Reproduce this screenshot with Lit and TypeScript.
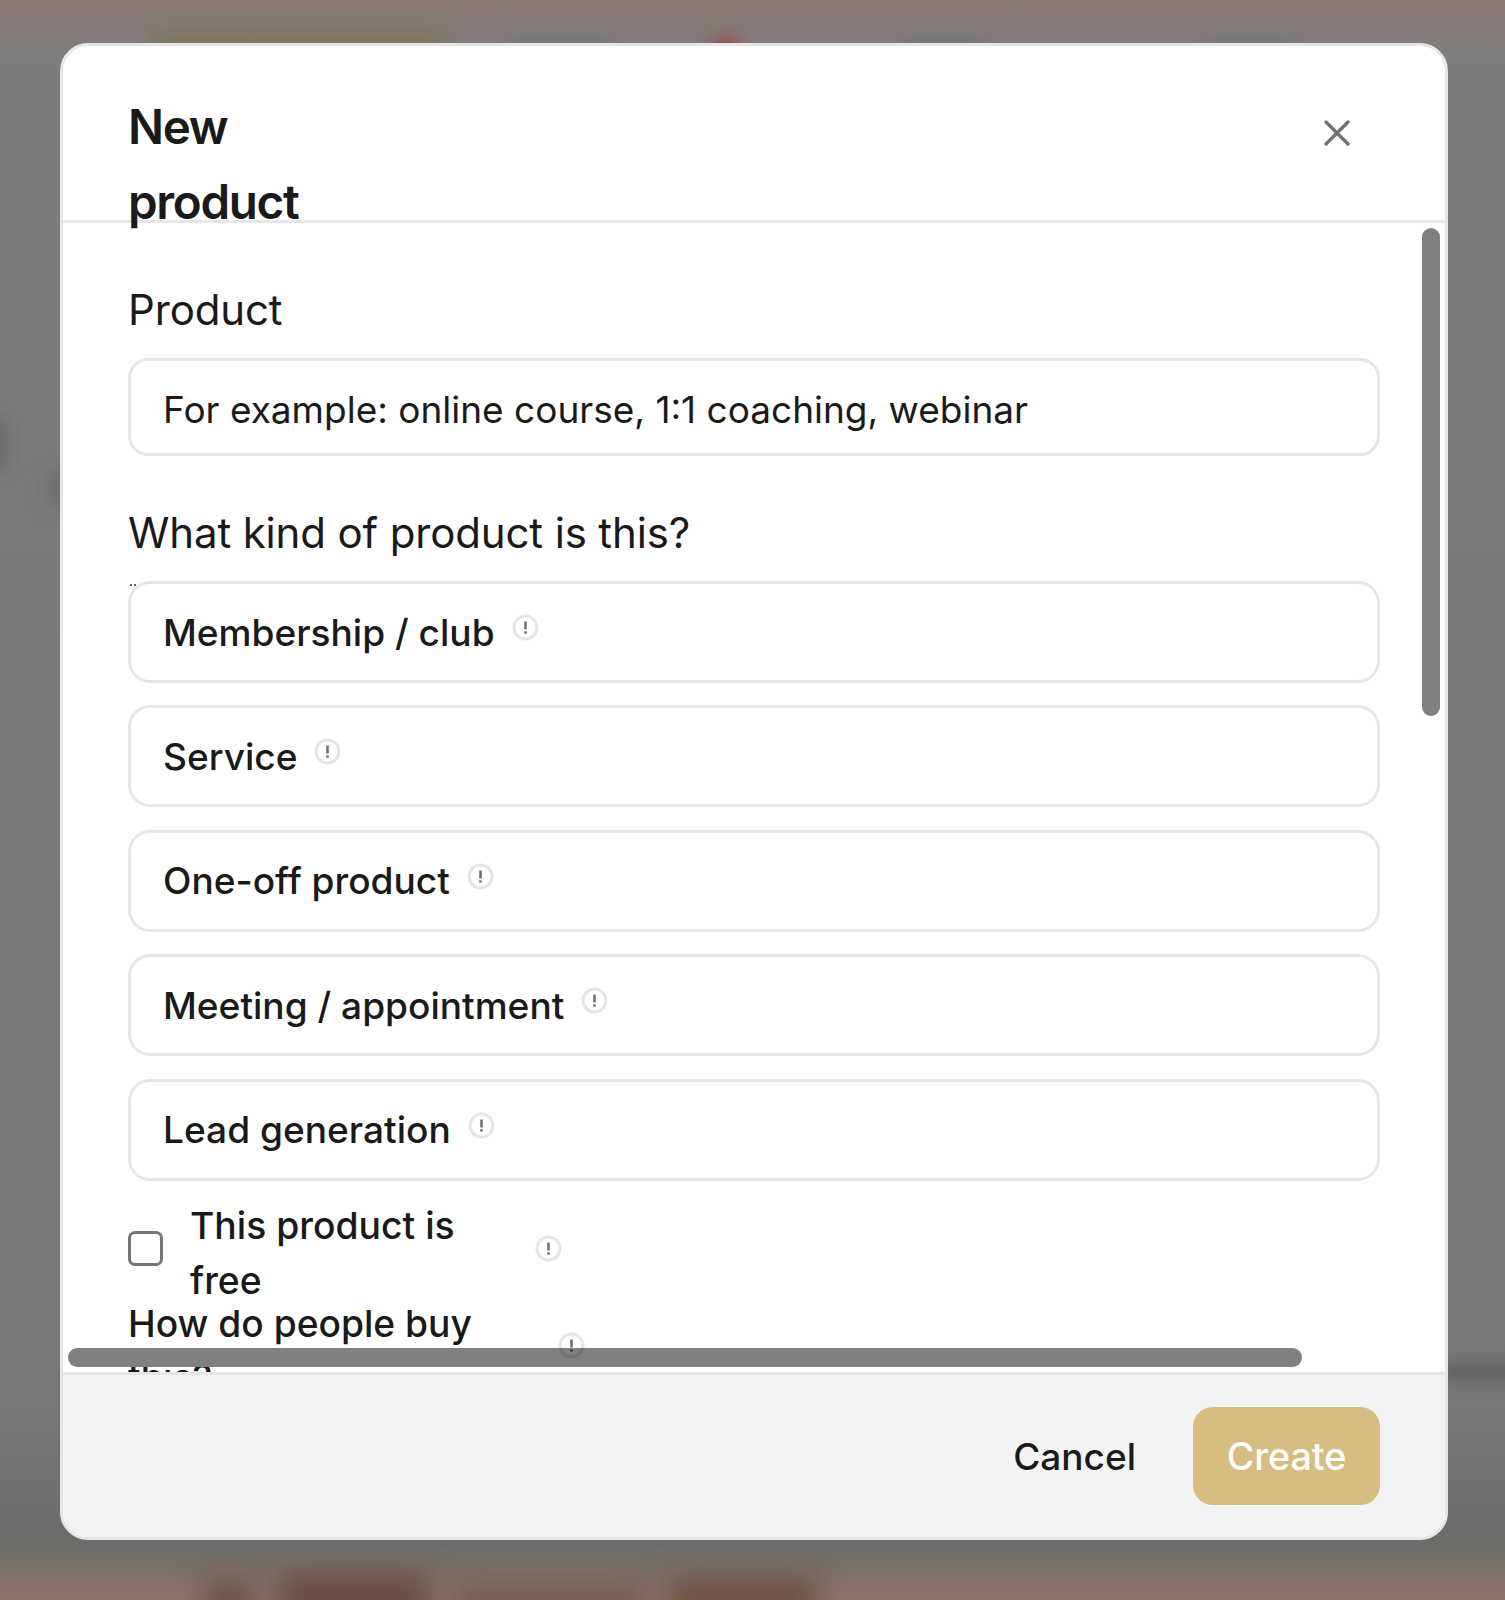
import { LitElement, html, css, svg } from "lit";
import { customElement } from "lit/decorators.js";

const info = html`<svg class="info" viewBox="0 0 27 27" aria-hidden="true">
  <circle cx="13.5" cy="13.5" r="11.5" fill="none" stroke="rgba(0,0,0,0.1)" stroke-width="3"></circle>
  <path d="M13.5 7.5v8" stroke="rgba(0,0,0,0.56)" stroke-width="2.6"></path>
  <path d="M13.5 17.3v2.4" stroke="rgba(0,0,0,0.56)" stroke-width="2.6"></path>
</svg>`;

const closeIcon = svg`<path d="M2 2 L24 24 M24 2 L2 24" stroke="#707070" stroke-width="3.2" stroke-linecap="round" fill="none"></path>`;

const kinds = ["Membership / club", "Service", "One-off product", "Meeting / appointment", "Lead generation"];

@customElement("app-root")
export class AppRoot extends LitElement {
  static styles = css`
    :host {
      display: block;
      position: relative;
      height: 1600px;
      overflow: hidden;
      font-family: Inter, "Liberation Sans", sans-serif;
      color: #1a1a1a;
      background: linear-gradient(180deg, #8c7a77 0, #857c7a 30px, #7d7d7d 70px, #7a7a7a 800px, #787878 1400px, #6d6c6a 1540px, #757069 1560px, #8d736a 1600px);
    }
    .blob { position: absolute; filter: blur(9px); }
    .b-yellow { left: 152px; top: 30px; width: 292px; height: 40px; background: #7e7660; }
    .b-red { left: 712px; top: 36px; width: 26px; height: 30px; background: #96443e; border-radius: 50%; }
    .b-g1 { left: 510px; top: 40px; width: 100px; height: 20px; background: #747474; }
    .b-g2 { left: 905px; top: 40px; width: 80px; height: 20px; background: #737373; }
    .b-g3 { left: 1205px; top: 40px; width: 90px; height: 20px; background: #757575; }
    .b-left1 { left: -12px; top: 420px; width: 16px; height: 50px; background: #646464; }
    .b-left2 { left: 50px; top: 470px; width: 16px; height: 36px; background: #6b6b6b; }
    .b-right { left: 1440px; top: 1366px; width: 80px; height: 12px; background: #525252; }
    .b-t { filter: blur(14px); }
    .b-t1 { left: 204px; top: 1578px; width: 50px; height: 50px; background: #6e544a; }
    .b-t2 { left: 278px; top: 1572px; width: 152px; height: 56px; background: #684e44; }
    .b-t3 { left: 454px; top: 1582px; width: 190px; height: 46px; background: #765c52; }
    .b-t4 { left: 668px; top: 1575px; width: 150px; height: 53px; background: #6e5448; }

    .modal {
      position: absolute;
      left: 60px;
      top: 43px;
      width: 1388px;
      height: 1497px;
      box-sizing: border-box;
      display: flex;
      flex-direction: column;
      border: 3px solid #e6e6e6;
      border-radius: 28px;
      background: #fff;
      overflow: hidden;
    }
    .head {
      position: relative;
      z-index: 1;
      flex: none;
      height: 176.5px;
      box-sizing: border-box;
      padding: 43px 95px 0 65px;
      display: flex;
      justify-content: space-between;
      align-items: flex-start;
      border-bottom: 3px solid #e6e6e6;
    }
    .title {
      margin: 0;
      width: 220px;
      font-size: 47.5px;
      line-height: 75px;
      font-weight: 600;
      letter-spacing: -1.3px;
    }
    .close { width: 26px; height: 26px; margin-top: 31px; display: block; }

    .body {
      position: relative;
      flex: 1;
      min-height: 0;
      overflow: hidden;
      padding: 60.6px 65px 0;
      box-sizing: border-box;
    }
    .label { font-size: 42px; line-height: 54px; font-weight: 400; letter-spacing: -0.14px; }
    .input {
      margin-top: 21px;
      height: 98px;
      box-sizing: border-box;
      border: 3px solid #e6e6e6;
      border-radius: 20px;
      padding: 4px 32px 0;
      display: flex;
      align-items: center;
      font-size: 37px;
    }
    .label.second { margin-top: 50px; }
    .cards { margin-top: 21px; display: flex; flex-direction: column; gap: 22.4px; }
    .card {
      height: 102px;
      box-sizing: border-box;
      border: 3px solid #e6e6e6;
      border-radius: 22px;
      padding: 0 32px;
      display: flex;
      align-items: center;
      gap: 17px;
      font-size: 37.1px;
      font-weight: 500;
    }
    .info { width: 27px; height: 27px; flex: none; display: block; }
    .card .info { margin-top: -9px; }
    .specks { position: absolute; left: 67px; top: 361px; width: 8px; height: 4px; display: flex; gap: 2px; }
    .specks i { width: 2px; height: 2px; background: #333; border-radius: 50%; }

    .check-row { margin-top: 19px; height: 98px; display: flex; align-items: center; }
    .box {
      width: 35px;
      height: 35px;
      box-sizing: border-box;
      border: 3px solid #767676;
      border-radius: 7px;
      background: #fff;
      flex: none;
    }
    .check-label { width: 300px; margin-left: 27px; padding-top: 10px; font-size: 37.3px; line-height: 54.5px; font-weight: 500; }
    .check-row .info { margin-left: 45px; }
    .how-row { display: flex; align-items: center; margin-top: -1px; }
    .how-label { width: 400px; font-size: 37.2px; line-height: 54px; font-weight: 500; }
    .how-row .info { margin-left: 30px; margin-top: -10px; position: relative; z-index: 1; }

    .bar-v { position: absolute; right: 5px; top: 5px; width: 18.5px; height: 488px; border-radius: 10px; background: #808080; }
    .bar-h { position: absolute; left: 4.5px; bottom: 5px; width: 1234px; height: 19px; border-radius: 10px; background: #808080; }

    .foot {
      flex: none;
      height: 165px;
      box-sizing: border-box;
      border-top: 3px solid #e6e6e6;
      background: #f3f3f3;
      padding: 0 65px;
      display: flex;
      justify-content: flex-end;
      align-items: center;
      gap: 57px;
      font-size: 37px;
      font-weight: 500;
    }
    .create {
      width: 187px;
      height: 98px;
      border-radius: 20px;
      background: #d8bd80;
      color: #fff;
      font-size: 37.6px;
      display: flex;
      align-items: center;
      justify-content: center;
    }
  `;

  render() {
    return html`
      <div class="blob b-yellow"></div>
      <div class="blob b-red"></div>
      <div class="blob b-g1"></div>
      <div class="blob b-g2"></div>
      <div class="blob b-g3"></div>
      <div class="blob b-left1"></div>
      <div class="blob b-left2"></div>
      <div class="blob b-right"></div>
      <div class="blob b-t b-t1"></div>
      <div class="blob b-t b-t2"></div>
      <div class="blob b-t b-t3"></div>
      <div class="blob b-t b-t4"></div>
      <div class="modal">
        <div class="head">
          <h2 class="title">New product</h2>
          <svg class="close" viewBox="0 0 26 26" aria-hidden="true">${closeIcon}</svg>
        </div>
        <div class="body">
          <div class="label">Product</div>
          <div class="input">For example: online course, 1:1 coaching, webinar</div>
          <div class="label second">What kind of product is this?</div>
          <div class="specks"><i></i><i></i></div>
          <div class="cards">
            ${kinds.map((k) => html`<div class="card"><span>${k}</span>${info}</div>`)}
          </div>
          <div class="check-row">
            <span class="box"></span>
            <span class="check-label">This product is free</span>
            ${info}
          </div>
          <div class="how-row">
            <span class="how-label">How do people buy this?</span>
            ${info}
          </div>
          <div class="bar-v"></div>
          <div class="bar-h"></div>
        </div>
        <div class="foot">
          <span>Cancel</span>
          <span class="create">Create</span>
        </div>
      </div>
    `;
  }
}
